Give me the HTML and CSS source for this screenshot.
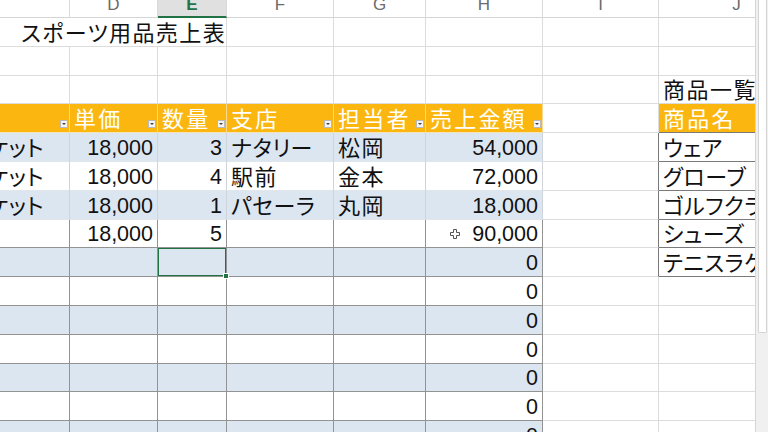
FILE: index.html
```html
<!DOCTYPE html>
<html lang="ja">
<head>
<meta charset="utf-8">
<title>スポーツ用品売上表</title>
<link rel="stylesheet" href="styles.css">
</head>
<body>
<div class="window">
  <div class="sheet">
    <div class="grid">
      <!-- column letters -->
      <div class="ch"></div>
      <div class="ch">D</div>
      <div class="ch on">E</div>
      <div class="ch">F</div>
      <div class="ch">G</div>
      <div class="ch">H</div>
      <div class="ch">I</div>
      <div class="ch">J</div>

      <!-- row 1 -->
      <div class="c title">スポーツ用品売上表</div>
      <div class="c"></div><div class="c"></div><div class="c"></div><div class="c"></div><div class="c"></div>

      <!-- row 2 -->
      <div class="c"></div><div class="c"></div><div class="c"></div><div class="c"></div><div class="c"></div><div class="c"></div><div class="c"></div><div class="c"></div>

      <!-- row 3 -->
      <div class="c"></div><div class="c"></div><div class="c"></div><div class="c"></div><div class="c"></div><div class="c"></div><div class="c"></div>
      <div class="c jp kj">商品一覧</div>

      <!-- row 4 : table headers -->
      <div class="c th"><span></span><span class="fb"></span></div>
      <div class="c th"><span class="jp">単価</span><span class="fb"></span></div>
      <div class="c th"><span class="jp">数量</span><span class="fb"></span></div>
      <div class="c th"><span class="jp">支店</span><span class="fb"></span></div>
      <div class="c th"><span class="jp">担当者</span><span class="fb"></span></div>
      <div class="c th"><span class="jp">売上金額</span><span class="fb"></span></div>
      <div class="c"></div>
      <div class="c th lh"><span class="jp">商品名</span></div>

      <!-- row 5 -->
      <div class="c tb band first"><span class="jp">テニスラケット</span></div>
      <div class="c tb band num">18,000</div>
      <div class="c tb band num">3</div>
      <div class="c tb band jp">ナタリー</div>
      <div class="c tb band jp kj">松岡</div>
      <div class="c tb band num">54,000</div>
      <div class="c ib"></div>
      <div class="c li jp">ウェア</div>

      <!-- row 6 -->
      <div class="c tb first"><span class="jp">テニスラケット</span></div>
      <div class="c tb num">18,000</div>
      <div class="c tb num">4</div>
      <div class="c tb jp kj">駅前</div>
      <div class="c tb jp kj">金本</div>
      <div class="c tb num">72,000</div>
      <div class="c ib"></div>
      <div class="c li jp">グローブ</div>

      <!-- row 7 -->
      <div class="c tb band first"><span class="jp">テニスラケット</span></div>
      <div class="c tb band num">18,000</div>
      <div class="c tb band num">1</div>
      <div class="c tb band jp">パセーラ</div>
      <div class="c tb band jp kj">丸岡</div>
      <div class="c tb band num">18,000</div>
      <div class="c ib"></div>
      <div class="c li jp">ゴルフクラブ</div>

      <!-- row 8 -->
      <div class="c tk"></div>
      <div class="c tk num">18,000</div>
      <div class="c tk num">5</div>
      <div class="c tk"></div>
      <div class="c tk"></div>
      <div class="c tk num"><svg class="cursor" width="10" height="10" viewBox="0 0 10 10"><path d="M3.5 0.5h3v3h3v3h-3v3h-3v-3h-3v-3h3z" fill="#fff" stroke="#555" stroke-width="1"/></svg>90,000</div>
      <div class="c ib"></div>
      <div class="c li jp">シューズ</div>

      <!-- row 9 -->
      <div class="c tk band"></div>
      <div class="c tk band"></div>
      <div class="c tk band sel"></div>
      <div class="c tk band"></div>
      <div class="c tk band"></div>
      <div class="c tk band num">0</div>
      <div class="c ib"></div>
      <div class="c li jp">テニスラケット</div>

      <!-- row 10 -->
      <div class="c tk"></div><div class="c tk"></div><div class="c tk"></div><div class="c tk"></div><div class="c tk"></div>
      <div class="c tk num">0</div><div class="c"></div><div class="c"></div>

      <!-- row 11 -->
      <div class="c tk band"></div><div class="c tk band"></div><div class="c tk band"></div><div class="c tk band"></div><div class="c tk band"></div>
      <div class="c tk band num">0</div><div class="c"></div><div class="c"></div>

      <!-- row 12 -->
      <div class="c tk"></div><div class="c tk"></div><div class="c tk"></div><div class="c tk"></div><div class="c tk"></div>
      <div class="c tk num">0</div><div class="c"></div><div class="c"></div>

      <!-- row 13 -->
      <div class="c tk band"></div><div class="c tk band"></div><div class="c tk band"></div><div class="c tk band"></div><div class="c tk band"></div>
      <div class="c tk band num">0</div><div class="c"></div><div class="c"></div>

      <!-- row 14 -->
      <div class="c tk"></div><div class="c tk"></div><div class="c tk"></div><div class="c tk"></div><div class="c tk"></div>
      <div class="c tk num">0</div><div class="c"></div><div class="c"></div>

      <!-- row 15 -->
      <div class="c tk band"></div><div class="c tk band"></div><div class="c tk band"></div><div class="c tk band"></div><div class="c tk band"></div>
      <div class="c tk band num">0</div><div class="c"></div><div class="c"></div>
    </div>
  </div>
  <div class="vscroll"><div class="thumb"></div></div>
</div>
</body>
</html>
```

FILE: styles.css
```css
html, body {
  margin: 0;
  padding: 0;
  background: #ffffff;
}

.window {
  width: 768px;
  height: 432px;
  display: flex;
  overflow: hidden;
  font-family: "Liberation Sans", "Noto Sans CJK JP", sans-serif;
  font-feature-settings: "palt";
  color: #111;
}

.sheet {
  width: 755px;
  height: 432px;
  overflow: hidden;
  flex: none;
}

.grid {
  display: grid;
  grid-template-columns: 70px 88px 69px 107px 92px 117px 116px 156px;
  grid-template-rows: 18px repeat(15, 28.8px);
  width: 815px;
}

/* column letter header */
.ch {
  box-sizing: border-box;
  border-right: 1px solid #dadada;
  border-bottom: 1px solid #d4d4d4;
  font-size: 17px;
  line-height: 10px;
  text-align: center;
  color: #6b6b6b;
  overflow: hidden;
  background: #ffffff;
}

.ch.on {
  background: #e0e0e0;
  color: #217346;
  font-weight: bold;
  border-bottom: 2px solid #217346;
}

/* cells */
.c {
  box-sizing: border-box;
  border-right: 1px solid #dcdcdc;
  border-bottom: 1px solid #dcdcdc;
  display: flex;
  align-items: flex-end;
  padding: 0 3px 0 4px;
  font-size: 21.5px;
  line-height: 25px;
  white-space: nowrap;
  overflow: hidden;
  min-width: 0;
}

.jp {
  font-size: 22px;
  letter-spacing: 0.5px;
}

.kj {
  letter-spacing: 1.5px;
}

.num {
  justify-content: flex-end;
  padding-right: 4px;
}

.title {
  grid-column: span 3;
  padding-left: 21px;
  font-size: 22px;
  letter-spacing: 1.4px;
}

/* orange table header */
.th {
  background: #fbb710;
  color: #ffffff;
  border-right-color: #fcd88a;
  border-bottom-color: #f4e3b8;
  justify-content: space-between;
  padding-right: 1px;
  align-items: flex-end;
}

.th .jp {
  letter-spacing: 2.2px;
}

.th.lh {
  border-bottom-color: #7a7a7a;
  border-right: none;
}

.fb {
  width: 8px;
  height: 8px;
  box-sizing: border-box;
  border: 1px solid #b9b9b9;
  background: #f4f4f4;
  margin-bottom: 4px;
  display: flex;
  align-items: center;
  justify-content: center;
  flex: none;
}

.fb::after {
  content: "";
  border-left: 2px solid transparent;
  border-right: 2px solid transparent;
  border-top: 2px solid #444;
}

/* table body */
.band {
  background: #dce6f1;
}

.tb {
  border-right-color: #cfd4da;
  border-bottom-color: #e2e6ea;
}

.tk {
  border-right-color: #939393;
  border-bottom-color: #939393;
}

.first {
  justify-content: flex-end;
  padding-right: 25px;
}

.cursor {
  margin: 0 12px 8px 0;
  flex: none;
}

.sel {
  position: relative;
  overflow: visible;
  box-shadow: inset 0 0 0 1px #217346;
}

.sel::after {
  content: "";
  position: absolute;
  right: -3px;
  bottom: -3px;
  width: 4px;
  height: 4px;
  background: #217346;
  border: 1px solid #ffffff;
}

/* product list */
.ib {
  border-right-color: #7a7a7a;
}

.li {
  background: #ffffff;
  border-bottom-color: #7a7a7a;
  border-right: none;
}

/* scrollbar */
.vscroll {
  width: 13px;
  height: 432px;
  flex: none;
  box-sizing: border-box;
  border-left: 1px solid #d6d6d6;
  background: #f0f0f0;
}

.thumb {
  height: 333px;
  margin: 0 1px 0 2px;
  box-sizing: border-box;
  background: #ffffff;
  border: 1px solid #d4d4d4;
  border-top: none;
  border-radius: 0 0 2px 2px;
}
```
